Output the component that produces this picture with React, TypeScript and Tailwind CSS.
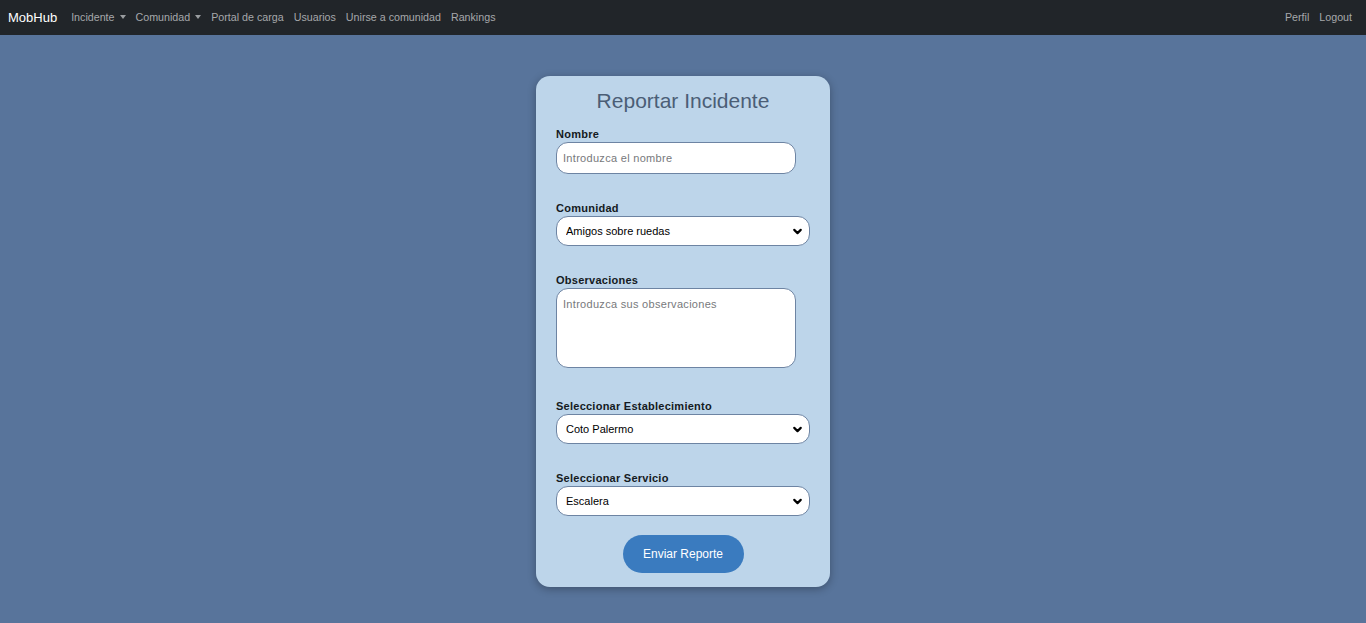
import { ChevronDown } from "lucide-react";

const navLinks = ["Portal de carga", "Usuarios", "Unirse a comunidad", "Rankings"];

const Caret = () => (
  <span className="ml-[5px] inline-block h-0 w-0 border-x-[3px] border-t-[4px] border-x-transparent border-t-[#9a9da0] align-middle" />
);

const Label = ({ children }: { children: string }) => (
  <label className="block text-[11px] font-bold leading-[14px] tracking-[0.25px] text-[#141a22]">
    {children}
  </label>
);

const Select = ({ value, options }: { value: string; options: string[] }) => (
  <div className="relative mt-px w-[254px]">
    <select
      defaultValue={value}
      className="h-[30px] w-full appearance-none rounded-[12px] border border-[#6d84a3] bg-white pl-[9px] pr-6 text-[11px] text-black outline-none"
    >
      {options.map((o) => (
        <option key={o}>{o}</option>
      ))}
    </select>
    <ChevronDown
      size={13}
      strokeWidth={4}
      className="pointer-events-none absolute right-[6px] top-[9px] text-black"
    />
  </div>
);

export default function App() {
  return (
    <div
      className="min-h-screen bg-[#58749b]"
      style={{ fontFamily: '"Liberation Sans", Arial, sans-serif' }}
    >
      <nav className="flex h-[35px] items-center justify-between bg-[#212529] pl-2 pr-[14px] text-[10.7px] text-[#a6a8ab]">
        <div className="flex items-center">
          <span className="mr-[14px] text-[13px] font-normal text-white">MobHub</span>
          <div className="flex items-center gap-[10px]">
            <span className="flex items-center">
              Incidente
              <Caret />
            </span>
            <span className="flex items-center">
              Comunidad
              <Caret />
            </span>
            {navLinks.map((l) => (
              <span key={l}>{l}</span>
            ))}
          </div>
        </div>
        <div className="flex items-center gap-[10px]">
          <span>Perfil</span>
          <span>Logout</span>
        </div>
      </nav>

      <div className="flex justify-center pt-[41px]">
        <form className="w-[294px] rounded-[14px] bg-[#bdd5ea] px-5 pb-[14px] pt-[12px] shadow-[0_2px_8px_rgba(0,0,0,0.3)]">
          <h3 className="text-center text-[21px] leading-[26px] text-[#4b5e76]">
            Reportar Incidente
          </h3>

          <div className="mt-[13px]">
            <Label>Nombre</Label>
            <input
              placeholder="Introduzca el nombre"
              className="mt-px h-[32px] w-[240px] rounded-[12px] border border-[#6d84a3] bg-white px-[6px] text-[11px] tracking-[0.3px] outline-none placeholder:text-[#77797c]"
            />
          </div>

          <div className="mt-[27px]">
            <Label>Comunidad</Label>
            <Select value="Amigos sobre ruedas" options={["Amigos sobre ruedas"]} />
          </div>

          <div className="mt-[27px]">
            <Label>Observaciones</Label>
            <textarea
              placeholder="Introduzca sus observaciones"
              className="mt-px block h-[80px] w-[240px] resize-none rounded-[12px] border border-[#6d84a3] bg-white px-[6px] py-[8px] text-[11px] leading-[14px] tracking-[0.3px] outline-none placeholder:text-[#77797c]"
            />
          </div>

          <div className="mt-[31px]">
            <Label>Seleccionar Establecimiento</Label>
            <Select value="Coto Palermo" options={["Coto Palermo"]} />
          </div>

          <div className="mt-[27px]">
            <Label>Seleccionar Servicio</Label>
            <Select value="Escalera" options={["Escalera"]} />
          </div>

          <div className="mt-[19px] flex justify-center">
            <button
              type="button"
              className="h-[38px] w-[121px] rounded-full bg-[#3a7bbf] text-[12px] text-white"
            >
              Enviar Reporte
            </button>
          </div>
        </form>
      </div>
    </div>
  );
}
